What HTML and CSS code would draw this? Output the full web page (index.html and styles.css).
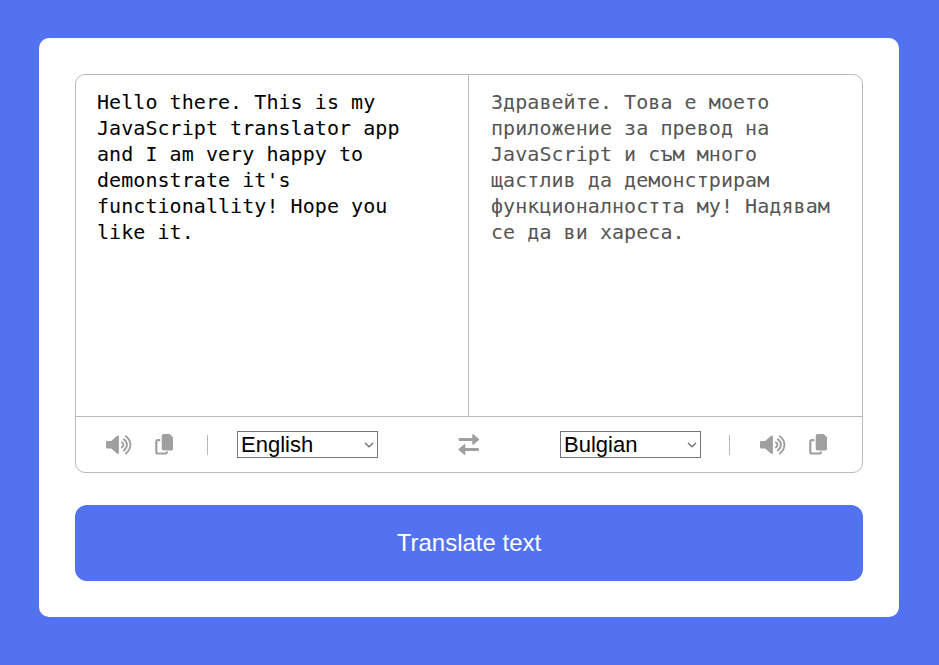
FILE: index.html
```html
<!DOCTYPE html>
<html lang="en">
<head>
<meta charset="utf-8">
<title>Translator</title>
<link rel="stylesheet" href="styles.css">
</head>
<body>
<svg class="sprite" aria-hidden="true">
  <symbol id="volume" viewBox="0 0 26 20">
    <path fill="currentColor" d="M1.2 6H5.2L10.8 .9Q12.9 -.4 12.9 1.7V17.7Q12.9 19.6 10.8 18.5L5.2 13.5H1.2Q0 13.5 0 12.3V7.2Q0 6 1.2 6Z"/>
    <path fill="none" stroke="currentColor" stroke-width="1.9" stroke-linecap="round" d="M15.9 7.2Q17.4 8.2 17.4 9.8T15.9 12.4M17.8 4.2Q20.9 6.4 20.9 9.8T17.8 15.4M19.8 1.2Q24.4 4.6 24.4 9.8T19.8 18.4"/>
  </symbol>
  <symbol id="copy" viewBox="0 0 18 21">
    <path fill="currentColor" d="M8.8 0H14.6L18.2 3.4V14.4Q18.2 16.5 16.1 16.5H8.8Q6.7 16.5 6.7 14.4V2.1Q6.7 0 8.8 0Z"/>
    <path fill="none" stroke="currentColor" stroke-width="2.2" d="M5.3 6.2H2.8Q1.3 6.2 1.3 7.7V18Q1.3 19.5 2.8 19.5H10.2Q11.8 19.5 11.8 18V17.5"/>
  </symbol>
  <symbol id="swap" viewBox="0 0 22 22">
    <path fill="none" stroke="currentColor" stroke-width="3" stroke-linecap="round" d="M2 5.5H15M7 15.5H19.6"/>
    <path fill="currentColor" d="M14.3 1.1Q14.3 -.5 15.7 .5L20.7 4.7Q21.6 5.5 20.7 6.3L15.7 10.5Q14.3 11.5 14.3 9.9ZM7.3 11.1Q7.3 9.5 5.9 10.5L.9 14.7Q0 15.5 .9 16.3L5.9 20.5Q7.3 21.5 7.3 19.9Z"/>
  </symbol>
</svg>
<main class="container">
  <section class="wrapper">
    <div class="text-input">
      <textarea class="from-text" spellcheck="false">Hello there. This is my
JavaScript translator app
and I am very happy to
demonstrate it's
functionallity! Hope you
like it.</textarea>
      <textarea class="to-text" spellcheck="false" readonly>Здравейте. Това е моето
приложение за превод на
JavaScript и съм много
щастлив да демонстрирам
функционалността му! Надявам
се да ви хареса.</textarea>
    </div>
    <div class="controls">
      <div class="row from">
        <div class="icons">
          <svg class="volume"><use href="#volume"/></svg>
          <svg class="copy"><use href="#copy"/></svg>
        </div>
        <div class="select-box">
          <select aria-label="From"><option>English</option></select>
          <svg class="chevron" viewBox="0 0 10 6"><path d="M1 1L5 4.8L9 1"/></svg>
        </div>
      </div>
      <svg class="swap"><use href="#swap"/></svg>
      <div class="row to">
        <div class="select-box">
          <select aria-label="To"><option>Bulgian</option></select>
          <svg class="chevron" viewBox="0 0 10 6"><path d="M1 1L5 4.8L9 1"/></svg>
        </div>
        <div class="icons">
          <svg class="volume"><use href="#volume"/></svg>
          <svg class="copy"><use href="#copy"/></svg>
        </div>
      </div>
    </div>
  </section>
  <button class="translate">Translate text</button>
</main>
</body>
</html>
```
FILE: styles.css
```css
* {
  box-sizing: border-box;
  margin: 0;
  padding: 0;
}

body {
  height: 665px;
  padding: 38px 40px 48px 39px;
  background: #5372f0;
  font-family: "Liberation Sans", sans-serif;
  overflow: hidden;
}

.sprite {
  display: none;
}

svg {
  display: block;
  overflow: visible;
}

.container {
  height: 579px;
  padding: 36px;
  border-radius: 10px;
  background: #fff;
}

.wrapper {
  height: 399px;
  border: 1px solid #b9b9b9;
  border-radius: 10px;
}

.text-input {
  display: grid;
  grid-template-columns: 393px 1fr;
  height: 342px;
  border-bottom: 1px solid #b9b9b9;
}

textarea {
  width: 100%;
  height: 100%;
  padding: 14px 10px 10px 21px;
  border: none;
  outline: none;
  resize: none;
  overflow: hidden;
  background: none;
  color: #000;
  font: 20px/26px "DejaVu Sans Mono", monospace;
  letter-spacing: 0.06px;
}

.from-text {
  border-right: 1px solid #b9b9b9;
}

.to-text {
  padding-left: 22px;
  color: #555;
}

.controls {
  display: flex;
  justify-content: space-between;
  align-items: center;
  height: 55px;
  padding: 0 35px 0 30px;
  color: #9f9f9f;
}

.row,
.icons {
  display: flex;
  align-items: center;
}

.icons {
  gap: 23px;
  height: 20px;
}

.from .icons {
  padding-right: 34px;
  margin-right: 29px;
  border-right: 1px solid #b9b9b9;
}

.to .icons {
  padding-left: 30px;
  margin-left: 28px;
  border-left: 1px solid #b9b9b9;
}

.volume {
  width: 26px;
  height: 20px;
}

.copy {
  width: 18px;
  height: 21px;
}

.swap {
  width: 22px;
  height: 22px;
}

.select-box {
  position: relative;
}

select {
  display: block;
  appearance: none;
  width: 141px;
  height: 27px;
  padding: 0 0 0 3px;
  border: 1px solid #767676;
  border-radius: 0;
  background: #fff;
  color: #000;
  font: 22px/25px "Liberation Sans", sans-serif;
}

.chevron {
  position: absolute;
  top: 11px;
  right: 4px;
  width: 10px;
  height: 6px;
  fill: none;
  stroke: #767676;
  stroke-width: 1.5;
}

.translate {
  display: block;
  width: 100%;
  height: 76px;
  margin-top: 32px;
  border: none;
  border-radius: 12px;
  background: #5372f0;
  color: #fff;
  font: 24px "Liberation Sans", sans-serif;
}
```
